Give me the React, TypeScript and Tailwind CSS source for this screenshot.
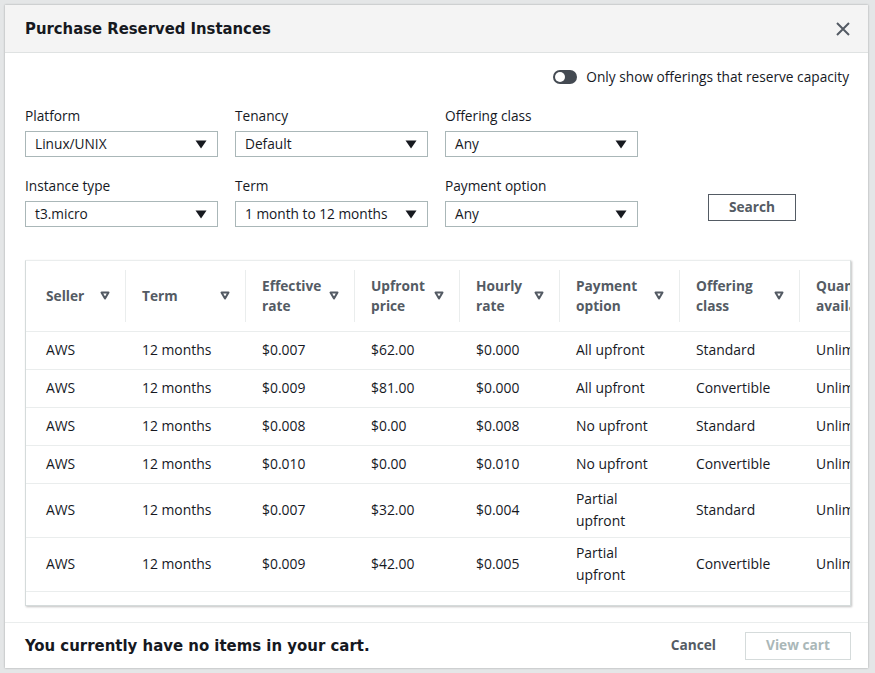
import React from "react";

const cols = [
  { label: ["Seller"], w: 100 },
  { label: ["Term"], w: 120 },
  { label: ["Effective", "rate"], w: 109 },
  { label: ["Upfront", "price"], w: 105 },
  { label: ["Hourly", "rate"], w: 100 },
  { label: ["Payment", "option"], w: 120 },
  { label: ["Offering", "class"], w: 120 },
  { label: ["Quantity", "available"], w: 140 },
];

const rows = [
  ["AWS", "12 months", "$0.007", "$62.00", "$0.000", "All upfront", "Standard", "Unlimited"],
  ["AWS", "12 months", "$0.009", "$81.00", "$0.000", "All upfront", "Convertible", "Unlimited"],
  ["AWS", "12 months", "$0.008", "$0.00", "$0.008", "No upfront", "Standard", "Unlimited"],
  ["AWS", "12 months", "$0.010", "$0.00", "$0.010", "No upfront", "Convertible", "Unlimited"],
  ["AWS", "12 months", "$0.007", "$32.00", "$0.004", "Partial upfront", "Standard", "Unlimited"],
  ["AWS", "12 months", "$0.009", "$42.00", "$0.005", "Partial upfront", "Convertible", "Unlimited"],
];

function SortIcon() {
  return (
    <svg width="10" height="9" viewBox="0 0 10 9" className="shrink-0">
      <path d="M1.5 1.5 H8.5 L5 7.5 Z" fill="none" stroke="#545b64" strokeWidth="2" strokeLinejoin="round" />
    </svg>
  );
}

function Select({ label, value }: { label: string; value: string }) {
  return (
    <div className="flex flex-col w-[193px]">
      <span className="text-[13.7px] leading-[18px] text-[#16191f] mb-[6px]">{label}</span>
      <div className="h-[26px] border border-[#aab7b8] flex items-center justify-between pl-[9px] pr-[10px]">
        <span className="text-[13.7px] text-[#16191f]">{value}</span>
        <svg width="12" height="9" viewBox="0 0 12 9">
          <path d="M0.5 0.5 H11.5 L6 8.5 Z" fill="#16191f" />
        </svg>
      </div>
    </div>
  );
}

export default function App() {
  return (
    <div className="w-[875px] h-[673px] bg-[#e4e6e7] pl-[5px] pt-[5px] font-['Open_Sans',sans-serif] text-[#16191f]">
      <div className="w-[863px] h-[663px] bg-white flex flex-col shadow-[0_0_2px_rgba(0,0,0,0.3)]">
        <div className="h-[48px] bg-[#f4f4f4] border-b border-[#dfe2e2] flex items-center justify-between pl-[20px] pr-[18px] shrink-0">
          <h1 className="text-[16.5px] pt-[1px] font-bold font-['DejaVu_Sans_Condensed',sans-serif]">Purchase Reserved Instances</h1>
          <svg width="14" height="14" viewBox="0 0 14 14">
            <path d="M1 1 L13 13 M13 1 L1 13" stroke="#545b64" strokeWidth="2" />
          </svg>
        </div>
        <div className="flex-1 px-[20px] pt-[16px] flex flex-col">
          <div className="flex justify-end items-center gap-[9px] -mr-[1px] h-[16px]">
            <div className="w-[24px] h-[14px] rounded-full bg-[#444a52] flex items-center pl-[2px]">
              <div className="w-[10px] h-[10px] rounded-full bg-white" />
            </div>
            <span className="text-[13.7px]">Only show offerings that reserve capacity</span>
          </div>
          <div className="mt-[22px] flex gap-[17px]">
            <Select label="Platform" value="Linux/UNIX" />
            <Select label="Tenancy" value="Default" />
            <Select label="Offering class" value="Any" />
          </div>
          <div className="mt-[20px] flex gap-[17px] items-end">
            <Select label="Instance type" value="t3.micro" />
            <Select label="Term" value="1 month to 12 months" />
            <Select label="Payment option" value="Any" />
            <button className="ml-[53px] mb-[6px] w-[88px] h-[27px] border border-[#545b64] text-[13.7px] font-bold text-[#545b64]">Search</button>
          </div>
          <div className="mt-[33px] w-[826px] h-[346px] overflow-hidden border border-[#d5dbdb] border-t-[#eaeded] shadow-[1px_1px_2px_rgba(0,0,0,0.25)]">
            <table className="table-fixed border-collapse w-[914px]">
              <colgroup>
                {cols.map((c, i) => (
                  <col key={i} style={{ width: c.w }} />
                ))}
              </colgroup>
              <thead>
                <tr className="h-[70px] border-b border-[#eaeded]">
                  {cols.map((c, i) => (
                    <th key={i} className="p-0 text-left align-middle">
                      <div className={`flex items-center justify-between ${i === 0 ? "pl-[20px]" : "pl-[16px]"} pr-[15px] h-[52px] ${i < cols.length - 1 ? "border-r border-[#eaeded]" : ""}`}>
                        <span className="text-[13.7px] leading-[20px] font-bold text-[#545b64] whitespace-nowrap">
                          {c.label.map((l, j) => (
                            <span key={j} className="block">{l}</span>
                          ))}
                        </span>
                        <SortIcon />
                      </div>
                    </th>
                  ))}
                </tr>
              </thead>
              <tbody>
                {rows.map((r, i) => (
                  <tr key={i} className={`border-b border-[#eaeded] ${i >= 4 ? "h-[54px]" : "h-[38px]"}`}>
                    {r.map((v, j) => (
                      <td key={j} className={`${j === 0 ? "pl-[20px]" : "pl-[16px]"} pr-[10px] text-[13.9px] leading-[22px] align-middle`}>
                        {j === 5 && v.startsWith("Partial") ? (
                          <>
                            <span className="block">Partial</span>
                            <span className="block">upfront</span>
                          </>
                        ) : (
                          <span className="whitespace-nowrap">{v}</span>
                        )}
                      </td>
                    ))}
                  </tr>
                ))}
              </tbody>
            </table>
          </div>
        </div>
        <div className="h-[46px] border-t border-[#eaeded] flex items-center justify-between pl-[20px] pr-[17px] shrink-0">
          <span className="text-[16.6px] pt-[1px] font-bold font-['DejaVu_Sans_Condensed',sans-serif]">You currently have no items in your cart.</span>
          <div className="flex items-center gap-[29px]">
            <span className="text-[13.7px] font-bold text-[#545b64]">Cancel</span>
            <button className="w-[106px] h-[28px] border border-[#d5dbdb] text-[13.7px] font-bold text-[#aab7b8]">View cart</button>
          </div>
        </div>
      </div>
    </div>
  );
}
